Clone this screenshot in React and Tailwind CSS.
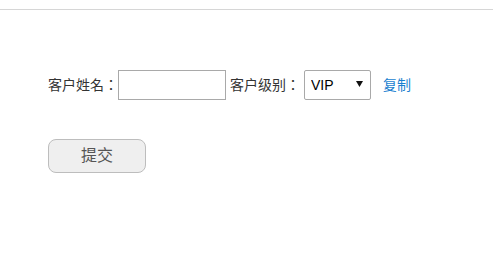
export default function App() {
  return (
    <div className="w-[493px] h-[264px] bg-white text-[#333] text-[14px] font-['Liberation_Sans','Noto_Sans_CJK_TC',sans-serif] [text-spacing-trim:space-all]">
      <div className="h-[10px] border-b border-[#d6d6d6]" />
      <div className="pl-[48px] pt-[60px]">
        <div className="flex items-center h-[30px]">
          <span className="leading-none">客户姓名：</span>
          <input
            type="text"
            className="w-[108px] h-[30px] border border-[#a9a9a9] outline-none px-1"
          />
          <span className="ml-[4px] mr-[4px] leading-none">客户级别：</span>
          <div className="relative w-[67px] h-[30px] border border-[#a9a9a9] rounded-[2px]">
            <select className="appearance-none w-full h-full pl-[6px] bg-transparent outline-none text-black text-[14px]">
              <option>VIP</option>
              <option>普通</option>
            </select>
            <svg className="absolute right-[7px] top-[10px] pointer-events-none" width="7" height="6" viewBox="0 0 7 6">
              <polygon points="0,0 7,0 3.5,6" fill="#111" />
            </svg>
          </div>
          <a href="#" className="ml-[12px] text-[#1a7fd0] leading-none">复制</a>
        </div>
        <button className="mt-[39px] w-[98px] h-[34px] rounded-[8px] border border-[#bdbdbd] bg-[#efefef] text-[16px] text-[#555]">
          提交
        </button>
      </div>
    </div>
  );
}
